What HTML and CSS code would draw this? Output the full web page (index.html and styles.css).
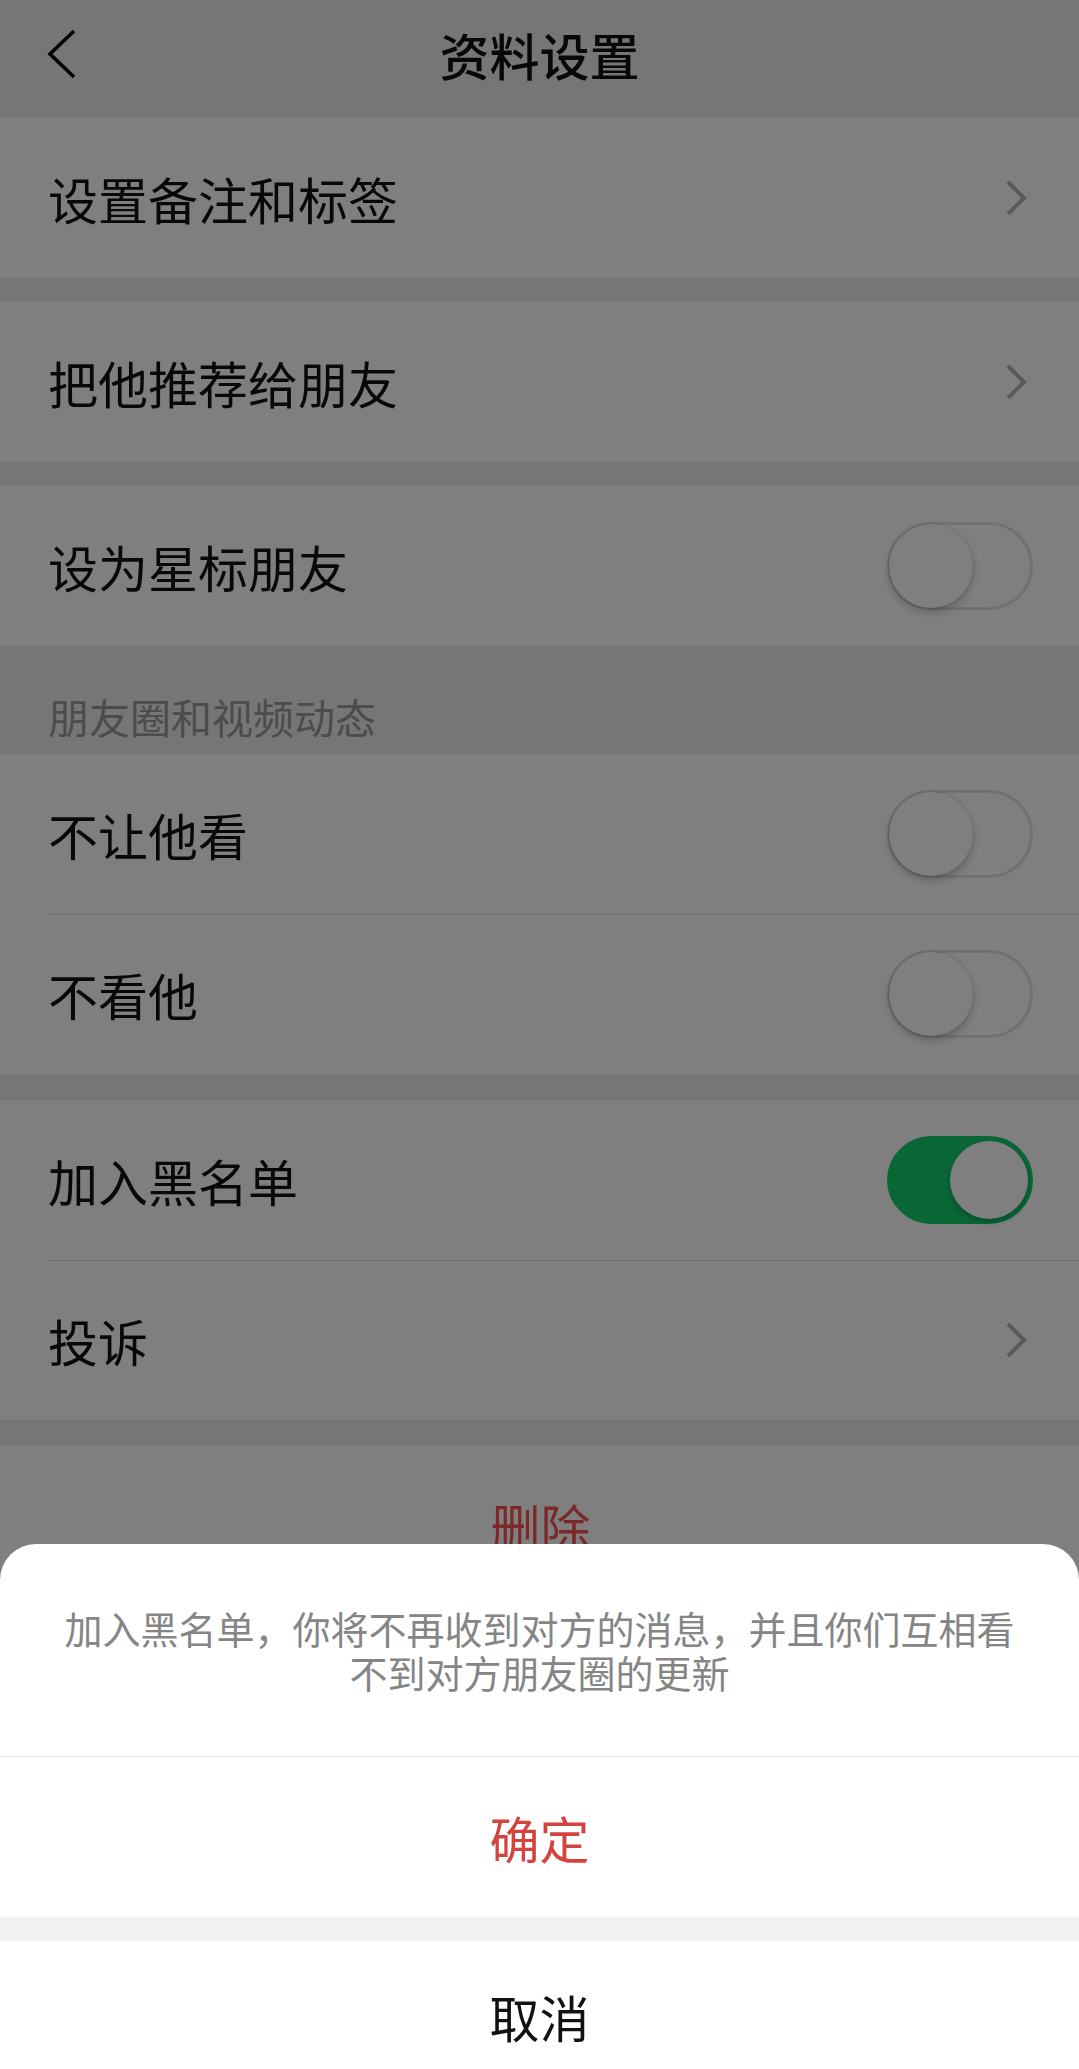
FILE: index.html
```html
<!DOCTYPE html>
<html lang="zh-CN">
<head>
<meta charset="utf-8">
<title>资料设置</title>
<link rel="stylesheet" href="styles.css">
</head>
<body>
<div class="page">
  <header class="nav">
    <svg class="back" width="32" height="52" viewBox="0 0 32 52"><polyline points="28,3 4,26 28,49" fill="none" stroke="#000" stroke-width="3.6"/></svg>
    <h1 class="title">资料设置</h1>
  </header>

  <section class="group">
    <div class="cell"><span class="label">设置备注和标签</span><svg class="arrow" width="22" height="36" viewBox="0 0 22 36"><polyline points="3,2 19,18 3,34" fill="none" stroke="#b3b3b3" stroke-width="4"/></svg></div>
  </section>

  <section class="group gap">
    <div class="cell"><span class="label">把他推荐给朋友</span><svg class="arrow" width="22" height="36" viewBox="0 0 22 36"><polyline points="3,2 19,18 3,34" fill="none" stroke="#b3b3b3" stroke-width="4"/></svg></div>
  </section>

  <section class="group gap">
    <div class="cell"><span class="label">设为星标朋友</span><span class="switch"><span class="knob"></span></span></div>
  </section>

  <div class="section-title">朋友圈和视频动态</div>

  <section class="group">
    <div class="cell"><span class="label">不让他看</span><span class="switch"><span class="knob"></span></span></div>
    <div class="cell"><span class="label">不看他</span><span class="switch"><span class="knob"></span></span></div>
  </section>

  <section class="group gap-lg">
    <div class="cell"><span class="label">加入黑名单</span><span class="switch on"><span class="knob"></span></span></div>
    <div class="cell"><span class="label">投诉</span><svg class="arrow" width="22" height="36" viewBox="0 0 22 36"><polyline points="3,2 19,18 3,34" fill="none" stroke="#b3b3b3" stroke-width="4"/></svg></div>
  </section>

  <section class="group gap-md">
    <div class="cell center"><span class="danger">删除</span></div>
    <div class="cell"></div>
  </section>
</div>

<div class="mask"></div>

<div class="sheet">
  <p class="sheet-msg">加入黑名单，你将不再收到对方的消息，并且你们互相看不到对方朋友圈的更新</p>
  <div class="sheet-btn confirm">确定</div>
  <div class="sheet-sep"></div>
  <div class="sheet-btn cancel">取消</div>
</div>
</body>
</html>
```

FILE: styles.css
```css
html, body {
  margin: 0;
  padding: 0;
  background: #ededed;
  overflow: hidden;
  height: 2069px;
}

body {
  font-family: "Noto Sans CJK SC", "Noto Sans", sans-serif;
  color: #111;
  position: relative;
}

.page {
  display: flex;
  flex-direction: column;
}

.nav {
  height: 118px;
  box-sizing: border-box;
  padding-bottom: 10px;
  display: flex;
  align-items: center;
  justify-content: center;
  position: relative;
}

.back {
  position: absolute;
  left: 46px;
  top: 28px;
}

.title {
  margin: 0;
  font-size: 50px;
  font-weight: 500;
  line-height: 1;
  color: #111;
}

.group {
  background: #fff;
  display: flex;
  flex-direction: column;
}

.group.gap { margin-top: 24px; }
.group.gap-lg { margin-top: 26px; }
.group.gap-md { margin-top: 25px; }

.cell {
  height: 160px;
  display: flex;
  align-items: center;
  justify-content: space-between;
  padding: 0 46px 0 48px;
  position: relative;
}

.cell + .cell::before {
  content: "";
  position: absolute;
  left: 48px;
  right: 0;
  top: 0;
  height: 1px;
  background: #dedede;
}

.group.gap-md .cell + .cell::before { display: none; }

.cell.center { justify-content: center; }

.label {
  font-size: 50px;
  line-height: 1;
  color: #111;
}

.arrow {
  margin-right: 6px;
}

.danger {
  font-size: 50px;
  line-height: 1;
  color: #fa5151;
}

.section-title {
  height: 108px;
  box-sizing: border-box;
  padding: 42px 48px 0;
  font-size: 41px;
  line-height: 56px;
  color: #999;
}

.switch {
  width: 146px;
  height: 88px;
  border-radius: 44px;
  box-sizing: border-box;
  border: 3px solid #e2e2e2;
  background: #fff;
  position: relative;
  display: block;
}

.switch .knob {
  position: absolute;
  left: -1px;
  top: -1px;
  width: 84px;
  height: 84px;
  border-radius: 50%;
  background: #fff;
  box-shadow: 0 4px 8px rgba(0, 0, 0, 0.24), 0 0 0 1px rgba(0, 0, 0, 0.06);
}

.switch.on {
  background: #12cf6c;
  border-color: #12cf6c;
}

.switch.on .knob {
  left: auto;
  right: 2px;
  top: 2px;
  width: 78px;
  height: 78px;
  box-shadow: 0 3px 6px rgba(0, 0, 0, 0.25);
}

.mask {
  position: fixed;
  inset: 0;
  background: rgba(0, 0, 0, 0.5);
}

.sheet {
  position: absolute;
  left: 0;
  right: 0;
  top: 1544px;
  background: #fff;
  border-radius: 36px 36px 0 0;
  display: flex;
  flex-direction: column;
}

.sheet-msg {
  margin: 0;
  height: 213px;
  box-sizing: border-box;
  padding: 0 55px;
  display: flex;
  align-items: center;
  justify-content: center;
  text-align: center;
  font-size: 38px;
  line-height: 44px;
  color: #858585;
  border-bottom: 1px solid #e5e5e5;
}

.sheet-btn {
  display: flex;
  align-items: center;
  justify-content: center;
  font-size: 50px;
  line-height: 1;
}

.confirm {
  height: 160px;
  color: #d4443f;
}

.sheet-sep {
  height: 24px;
  background: #f2f2f2;
}

.cancel {
  height: 150px;
  color: #111;
}
```
